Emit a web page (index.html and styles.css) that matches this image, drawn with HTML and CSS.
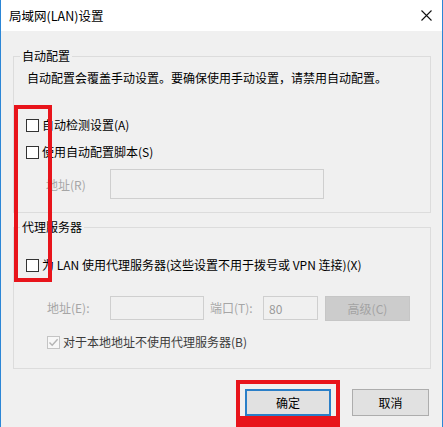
FILE: index.html
```html
<html>
<head>
<meta charset="utf-8">
<link rel="stylesheet" href="styles.css">
</head>
<body>
<div class="window">
  <div class="titlebar">
    <span class="title">局域网(LAN)设置</span>
    <svg class="close" width="11" height="11" viewBox="0 0 11 11">
      <path d="M0.5 0.5L10.5 10.5M10.5 0.5L0.5 10.5" stroke="#111" stroke-width="1.1" fill="none"/>
    </svg>
  </div>

  <div class="content">
    <div class="group group-auto">
      <div class="group-title">自动配置</div>
      <p class="desc">自动配置会覆盖手动设置。要确保使用手动设置，请禁用自动配置。</p>
      <label class="check check-detect"><span class="box"></span>自动检测设置(A)</label>
      <label class="check check-script"><span class="box"></span>使用自动配置脚本(S)</label>
      <div class="field-row script-row">
        <span class="field-label muted">地址(R)</span>
        <span class="textbox script-box"></span>
      </div>
    </div>

    <div class="group group-proxy">
      <div class="group-title">代理服务器</div>
      <label class="check check-proxy"><span class="box"></span>为 LAN 使用代理服务器(这些设置不用于拨号或 VPN 连接)(X)</label>
      <div class="field-row proxy-row">
        <span class="field-label muted">地址(E):</span>
        <span class="textbox addr-box"></span>
        <span class="port-label muted">端口(T):</span>
        <span class="textbox port-box">80</span>
        <span class="btn btn-disabled">高级(C)</span>
      </div>
      <label class="check check-bypass"><span class="box box-checked">
        <svg width="11" height="11" viewBox="0 0 11 11"><path d="M1.5 5.5L4.2 8.3L9.6 2.2" stroke="#b4b4b4" stroke-width="1.4" fill="none"/></svg>
      </span>对于本地地址不使用代理服务器(B)</label>
    </div>

    <div class="actions">
      <span class="btn btn-default">确定</span>
      <span class="btn btn-cancel">取消</span>
    </div>
  </div>

  <div class="mark mark-left"></div>
  <div class="mark mark-ok"></div>
  <div class="mark-band"></div>
</div>
</body>
</html>
```

FILE: styles.css
```css
body {
    margin: 0;
    font-family: "Noto Sans CJK SC", "Microsoft YaHei", sans-serif;
    font-size: 12px;
    color: #000000;
}
p {
    margin: 0;
}
.window {
    position: relative;
    width: 443px;
    height: 427px;
    box-sizing: border-box;
    border-left: 1px solid #2b86d6;
    border-right: 1px solid #2b86d6;
    background-color: #f0f0f0;
    overflow: hidden;
}
.titlebar {
    height: 31px;
    background-color: #ffffff;
    display: flex;
    align-items: center;
    justify-content: space-between;
    padding: 0 10px 0 8px;
}
.title {
    font-size: 12.5px;
    line-height: 16px;
}
.close {
    display: block;
}
.content {
    padding: 25px 11px 0 12px;
}
.group {
    border: 1px solid #dcdcdc;
    padding: 0 0 13px 12px;
}
.group-proxy {
    margin-top: 14px;
    padding-bottom: 16px;
}
.group-title {
    width: fit-content;
    margin: -9px 0 0 -6px;
    padding: 0 2px;
    line-height: 16px;
    background-color: #f0f0f0;
}
.desc {
    margin: 6px 0 0 1px;
    line-height: 16px;
}
.check {
    display: flex;
    align-items: center;
    height: 20px;
    line-height: 16px;
}
.check-detect {
    margin-top: 29px;
}
.check-script {
    margin-top: 7px;
}
.check-proxy {
    margin-top: 20px;
}
.check-bypass {
    margin: 11px 0 0 21px;
    color: #3c3c3c;
}
.box {
    width: 13px;
    height: 13px;
    box-sizing: border-box;
    border: 1px solid #333333;
    background-color: #ffffff;
    margin-right: 3px;
    flex-shrink: 0;
}
.box-checked {
    border-color: #c4c4c4;
    background-color: #f7f7f7;
    display: flex;
    align-items: center;
    justify-content: center;
}
.box-checked svg {
    display: block;
}
.field-row {
    display: flex;
    align-items: center;
}
.script-row {
    height: 30px;
    margin-top: 7px;
}
.proxy-row {
    height: 25px;
    margin-top: 21px;
    align-items: flex-start;
}
.proxy-row span {
    line-height: 24px;
}
.field-label {
    width: 84px;
    box-sizing: border-box;
    padding-left: 20px;
}
.proxy-row .field-label {
    padding-left: 21px;
}
.muted {
    color: #a6a6a6;
}
.textbox {
    box-sizing: border-box;
    border: 1px solid #cfcfcf;
    background-color: #f0f0f0;
    height: 24px;
}
.script-box {
    width: 214px;
    height: 30px;
}
.addr-box {
    width: 94px;
}
.port-label {
    width: 59px;
    box-sizing: border-box;
    padding-left: 6px;
}
.port-box {
    width: 55px;
    padding-left: 5px;
    color: #9a9a9a;
    line-height: 22px;
}
.btn {
    box-sizing: border-box;
    display: flex;
    align-items: center;
    justify-content: center;
    border: 1px solid #adadad;
    background-color: #e1e1e1;
}
.btn-disabled {
    width: 85px;
    height: 25px;
    margin-left: 7px;
    border-color: #c6c6c6;
    background-color: #cccccc;
    color: #a3a3a3;
}
.actions {
    display: flex;
    justify-content: flex-end;
    gap: 21px;
    margin: 20px 2px 0 0;
}
.actions .btn {
    height: 27px;
}
.btn-default {
    width: 86px;
    border: 2px solid #2a7fc8;
}
.btn-cancel {
    width: 77px;
}
.mark {
    position: absolute;
    box-sizing: border-box;
    border: 4px solid #e8141b;
}
.mark-left {
    left: 13px;
    top: 105px;
    width: 38px;
    height: 177px;
}
.mark-ok {
    left: 235px;
    top: 380px;
    width: 104px;
    height: 60px;
}
.mark-band {
    position: absolute;
    left: 235px;
    top: 416px;
    width: 104px;
    height: 11px;
    background-color: #e8141b;
}
```
